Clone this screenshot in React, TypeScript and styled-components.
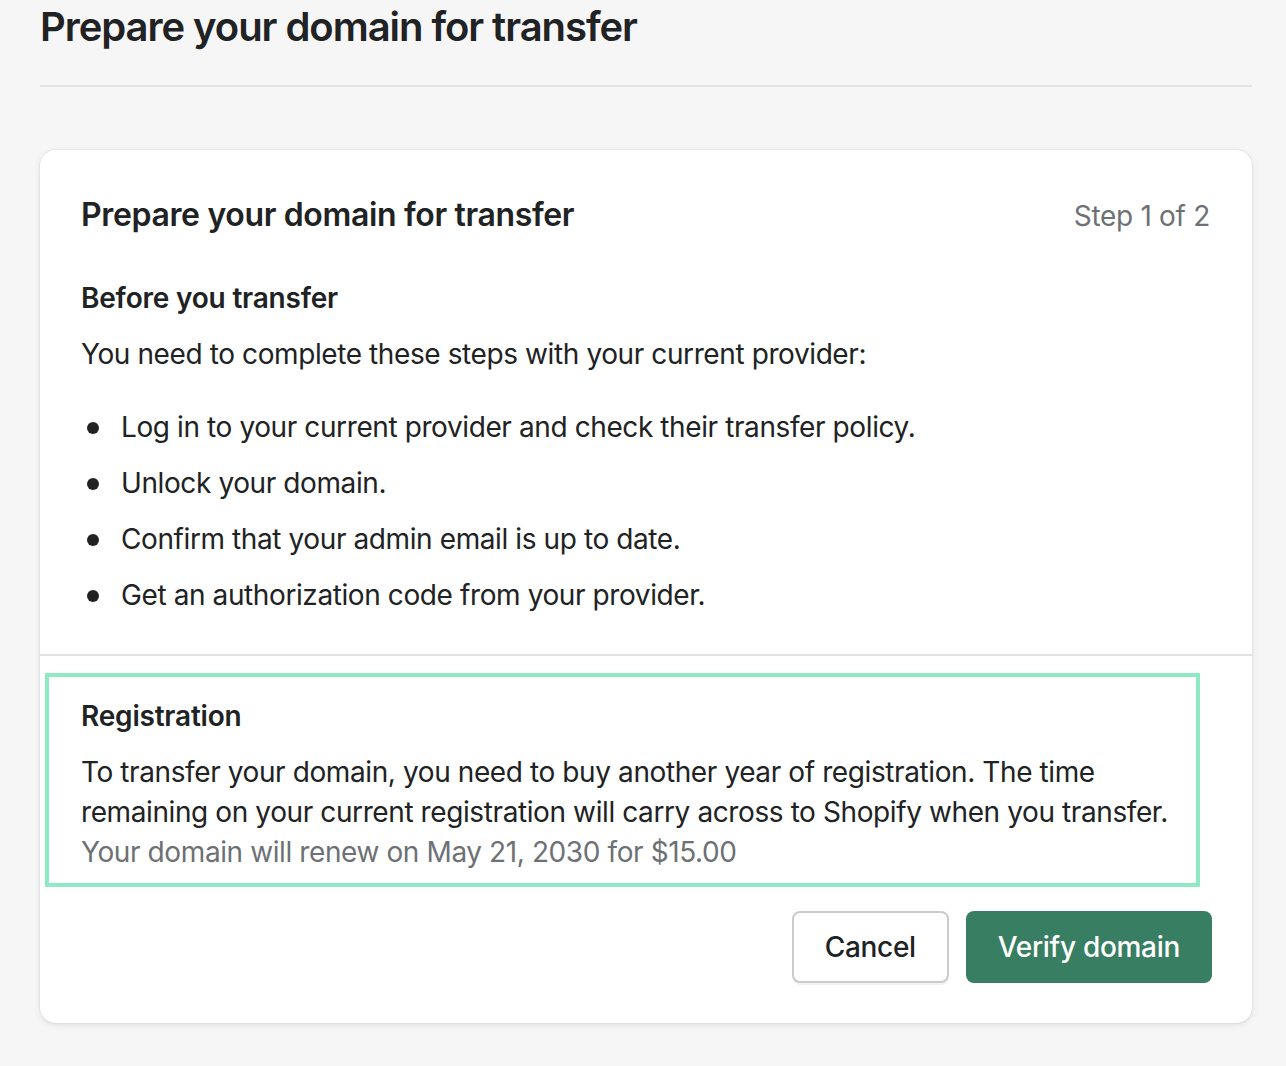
import React from 'react'
import styled, { createGlobalStyle } from 'styled-components'

const GlobalStyle = createGlobalStyle`
    html, body {
        margin: 0;
        padding: 0;
        background: #f6f6f7;
    }
    body {
        font-family: Inter, "Noto Sans", "Liberation Sans", sans-serif;
        color: #202223;
        -webkit-font-smoothing: antialiased;
    }
`

const Page = styled.div`
    padding: 0 34px 40px 40px;
`

const PageHeader = styled.header`
    padding-top: 3px;
    padding-bottom: 34px;
    border-bottom: 2px solid #e1e3e5;
`

const PageTitle = styled.h1`
    margin: 0;
    font-size: 40px;
    line-height: 48px;
    font-weight: 600;
    letter-spacing: -1.05px;
`

const Card = styled.section`
    margin-top: 63px;
    background: #fff;
    border-radius: 16px;
    box-shadow: 0 0 0 1px rgba(63, 63, 68, 0.04), 0 2px 6px rgba(63, 63, 68, 0.12);
    overflow: hidden;
`

const CardHeader = styled.div`
    display: flex;
    align-items: baseline;
    justify-content: space-between;
    padding: 41px 42px 0 41px;
`

const CardTitle = styled.h2`
    margin: 0;
    font-size: 32px;
    line-height: 48px;
    font-weight: 600;
    letter-spacing: -0.35px;
`

const StepLabel = styled.span`
    font-size: 28px;
    line-height: 40px;
    color: #6d7175;
    letter-spacing: -0.3px;
`

const Section = styled.div`
    padding: 39px 40px 39px 41px;
`

const Divider = styled.hr`
    margin: 0;
    border: none;
    border-top: 2px solid #e1e3e5;
`

const SectionTitle = styled.h3`
    margin: 0 0 16px;
    font-size: 28px;
    line-height: 40px;
    font-weight: 600;
    letter-spacing: -0.2px;
`

const Text = styled.p<{ $subdued?: boolean }>`
    margin: 0;
    font-size: 28px;
    line-height: 40px;
    color: ${p => (p.$subdued ? '#6d7175' : '#202223')};
    letter-spacing: -0.4px;
`

const Steps = styled.ul`
    margin: 33px 0 0;
    padding: 0 0 0 40px;
    display: flex;
    flex-direction: column;
    gap: 16px;
`

const Step = styled.li`
    font-size: 28px;
    line-height: 40px;
    letter-spacing: -0.4px;
    list-style: none;
    position: relative;

    &::before {
        content: '';
        position: absolute;
        left: -34px;
        top: 15px;
        width: 12px;
        height: 12px;
        border-radius: 50%;
        background: #202223;
    }
`

const Highlight = styled.div`
    margin: 17px 52px 0 5px;
    border: 4px solid #8eeac2;
    padding: 19px 8px 11px 32px;
`

const Footer = styled.div`
    display: flex;
    justify-content: flex-end;
    gap: 17px;
    padding: 24px 40px 40px;
`

const Button = styled.button<{ $primary?: boolean }>`
    height: 72px;
    padding: 0 ${p => (p.$primary ? 32 : 31)}px;
    border-radius: 8px;
    font-family: inherit;
    font-size: 28px;
    font-weight: 500;
    letter-spacing: -0.3px;
    cursor: pointer;
    background: ${p => (p.$primary ? '#387e62' : '#fff')};
    color: ${p => (p.$primary ? '#fff' : '#202223')};
    border: ${p => (p.$primary ? 'none' : '2px solid #c9cccf')};
    box-shadow: ${p => (p.$primary ? 'none' : '0 2px 0 rgba(0, 0, 0, 0.05)')};
`

const steps = [
    'Log in to your current provider and check their transfer policy.',
    'Unlock your domain.',
    'Confirm that your admin email is up to date.',
    'Get an authorization code from your provider.',
]

const App = () => (
    <>
        <GlobalStyle />
        <Page>
            <PageHeader>
                <PageTitle>Prepare your domain for transfer</PageTitle>
            </PageHeader>
            <Card>
                <CardHeader>
                    <CardTitle>Prepare your domain for transfer</CardTitle>
                    <StepLabel>Step 1 of 2</StepLabel>
                </CardHeader>
                <Section>
                    <SectionTitle>Before you transfer</SectionTitle>
                    <Text>You need to complete these steps with your current provider:</Text>
                    <Steps>
                        {steps.map(s => <Step key={s}>{s}</Step>)}
                    </Steps>
                </Section>
                <Divider />
                <Highlight>
                    <SectionTitle>Registration</SectionTitle>
                    <Text>
                        To transfer your domain, you need to buy another year of registration. The time remaining on
                        your current registration will carry across to Shopify when you transfer.
                    </Text>
                    <Text $subdued>Your domain will renew on May 21, 2030 for $15.00</Text>
                </Highlight>
                <Footer>
                    <Button>Cancel</Button>
                    <Button $primary>Verify domain</Button>
                </Footer>
            </Card>
        </Page>
    </>
)

export default App
